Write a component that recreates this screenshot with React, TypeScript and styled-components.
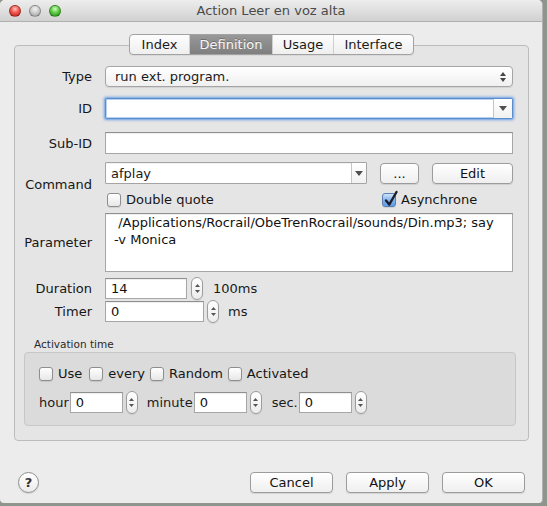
import React from "react";
import styled, { createGlobalStyle } from "styled-components";

const GlobalStyle = createGlobalStyle`
  html, body { margin: 0; padding: 0; }
  body {
    background: #8f948c;
    font-family: "DejaVu Sans", "Liberation Sans", sans-serif;
    font-size: 13px;
    color: #1a1a1a;
  }
  * { box-sizing: border-box; }
`;

const Window = styled.div`
  width: 543px;
  height: 503px;
  background: #ececec;
  border-radius: 5px 5px 4px 4px;
  overflow: hidden;
  display: flex;
  flex-direction: column;
  border-right: 1px solid #b2b2b2;
`;

const TitleBar = styled.div`
  height: 22px;
  flex: none;
  display: grid;
  grid-template-columns: 1fr auto 1fr;
  align-items: center;
  background: linear-gradient(#ededed, #d1d1d1);
  border-bottom: 1px solid #b0b0b0;
`;

const Lights = styled.div`
  display: flex;
  gap: 8px;
  padding-left: 9px;
`;

const Light = styled.span<{ $c: "red" | "grey" | "green" }>`
  width: 12px;
  height: 12px;
  border-radius: 50%;
  border: 1px solid rgba(0, 0, 0, 0.28);
  background: ${(p) =>
    p.$c === "red"
      ? "radial-gradient(circle at 50% 30%, #ffc4c0 0%, #f0584f 45%, #b81a14 100%)"
      : p.$c === "green"
      ? "radial-gradient(circle at 50% 30%, #d4fbc4 0%, #5fcd44 45%, #23891a 100%)"
      : "radial-gradient(circle at 50% 30%, #f4f4f4 0%, #c9c9c9 50%, #9a9a9a 100%)"};
`;

const Title = styled.div`
  font-size: 13px;
  color: #4a4a4a;
  white-space: nowrap;
`;

const Body = styled.div`
  flex: 1;
  display: flex;
  flex-direction: column;
  padding: 12px 13px 0 14px;
`;

const TabStrip = styled.div`
  align-self: center;
  display: flex;
  height: 21px;
  margin-bottom: -10px;
  position: relative;
  z-index: 1;
  border: 1px solid #a2a2a2;
  border-radius: 4px;
  background: linear-gradient(#fdfdfd, #efefef);
  overflow: hidden;
  box-shadow: 0 1px 1px rgba(0, 0, 0, 0.06);
`;

const Tab = styled.div<{ $active?: boolean; $w: number }>`
  width: ${(p) => p.$w}px;
  display: flex;
  align-items: center;
  justify-content: center;
  font-size: 13px;
  color: ${(p) => (p.$active ? "#f6f6f6" : "#1a1a1a")};
  background: ${(p) => (p.$active ? "linear-gradient(#989898, #7f7f7f)" : "transparent")};
  text-shadow: ${(p) => (p.$active ? "0 -1px 0 rgba(0,0,0,0.25)" : "none")};
  & + & {
    border-left: 1px solid #cfcfcf;
  }
`;

const Panel = styled.div`
  height: 396px;
  flex: none;
  border: 1px solid #bcbcbc;
  border-radius: 4px;
  background: #e5e5e5;
  padding-top: 20px;
  display: flex;
  flex-direction: column;
`;

const Form = styled.div`
  display: flex;
  flex-direction: column;
  padding-right: 15px;
`;

const Row = styled.div<{ $mt?: number }>`
  display: grid;
  grid-template-columns: 77px 1fr;
  column-gap: 13px;
  align-items: center;
  margin-top: ${(p) => p.$mt ?? 0}px;
`;

const Label = styled.div`
  text-align: right;
  white-space: nowrap;
  font-size: 13px;
  line-height: 15px;
  color: #161616;
`;

const Select = styled.div`
  height: 21px;
  border: 1px solid #a5a5a5;
  border-radius: 4px;
  background: linear-gradient(#ffffff, #f0f0f0);
  display: flex;
  align-items: center;
  justify-content: space-between;
  padding: 0 6px 0 9px;
  box-shadow: 0 1px 1px rgba(0, 0, 0, 0.08);
`;

const Combo = styled.div<{ $focus?: boolean; $w?: number }>`
  height: ${(p) => (p.$focus ? 21 : 22)}px;
  ${(p) => (p.$w ? `width: ${p.$w}px;` : "")}
  display: flex;
  background: #fff;
  border: 1px solid ${(p) => (p.$focus ? "#5b8ccc" : "#a4a4a4")};
  box-shadow: ${(p) =>
    p.$focus
      ? "0 0 0 1px #8fb6e6, 0 0 2px 2px rgba(130,172,228,0.55), inset 0 0 0 1px #b9d2f1"
      : "inset 0 1px 1px rgba(0,0,0,0.06)"};
  border-radius: ${(p) => (p.$focus ? 2 : 1)}px;
`;

const ComboText = styled.div`
  flex: 1;
  display: flex;
  align-items: center;
  padding-left: 5px;
  font-size: 13px;
`;

const ComboButton = styled.div<{ $w: number }>`
  width: ${(p) => p.$w}px;
  flex: none;
  border-left: 1px solid #c4c4c4;
  background: linear-gradient(#ffffff, #f1f1f1);
  display: flex;
  align-items: center;
  justify-content: center;
`;

const Input = styled.div<{ $w?: number; $h?: number }>`
  height: ${(p) => p.$h ?? 21}px;
  ${(p) => (p.$w ? `width: ${p.$w}px;` : "")}
  flex: none;
  background: #fff;
  border: 1px solid #a6a6a6;
  border-top-color: #8f8f8f;
  box-shadow: inset 0 1px 1px rgba(0, 0, 0, 0.07);
  display: flex;
  align-items: center;
  padding-left: 5px;
  font-size: 13px;
  color: #111;
`;

const TextArea = styled.div`
  height: 59px;
  background: #fff;
  border: 1px solid #a6a6a6;
  border-top-color: #8f8f8f;
  box-shadow: inset 0 1px 1px rgba(0, 0, 0, 0.07);
  padding: 0 0 0 8px;
  font-size: 13px;
  line-height: 17px;
  white-space: pre;
  color: #111;
`;

const CommandFields = styled.div`
  display: grid;
  grid-template-columns: 262px 39px 1fr;
  grid-template-rows: 22px 14px;
  column-gap: 13px;
  row-gap: 9px;
  align-items: center;
`;

const AsyncCell = styled.div`
  grid-column: 2 / 4;
  display: flex;
  height: 14px;
`;

const Button = styled.button<{ $w?: number }>`
  height: 21px;
  ${(p) => (p.$w ? `width: ${p.$w}px;` : "")}
  border: 1px solid #9c9c9c;
  border-radius: 4px;
  background: linear-gradient(#ffffff, #efefef);
  font-family: "DejaVu Sans", "Liberation Sans", sans-serif;
  font-size: 13px;
  color: #111;
  padding: 0;
  box-shadow: 0 1px 1px rgba(0, 0, 0, 0.1);
`;

const CheckLabel = styled.label<{ $ml?: number; $mr?: number }>`
  display: flex;
  flex: none;
  align-items: center;
  gap: 5px;
  height: 14px;
  line-height: 14px;
  font-size: 13px;
  color: #161616;
  white-space: nowrap;
  margin-left: ${(p) => p.$ml ?? 0}px;
  margin-right: ${(p) => p.$mr ?? 0}px;
`;

const Box = styled.span<{ $checked?: boolean }>`
  position: relative;
  width: 14px;
  height: 14px;
  flex: none;
  border-radius: 3px;
  border: 1px solid ${(p) => (p.$checked ? "#5a7fb3" : "#8e8e8e")};
  background: ${(p) =>
    p.$checked ? "linear-gradient(#cfe3f9, #7cb1ec 55%, #5d9ce6)" : "linear-gradient(#ffffff, #e7e7e7)"};
  box-shadow: 0 1px 1px rgba(0, 0, 0, 0.1);
`;

const CheckMark = styled.svg`
  position: absolute;
  left: 1px;
  top: -3px;
  overflow: visible;
`;

const Spin = styled.span<{ $ml: number }>`
  width: 12px;
  height: 23px;
  flex: none;
  margin-left: ${(p) => p.$ml}px;
  border: 1px solid #9d9d9d;
  border-radius: 6px;
  background: linear-gradient(#ffffff, #ececec);
  display: flex;
  flex-direction: column;
  align-items: center;
  justify-content: center;
  gap: 3px;
  box-shadow: 0 1px 1px rgba(0, 0, 0, 0.08);
`;

const InlineRow = styled.div`
  display: flex;
  align-items: center;
  height: 21px;
`;

const Unit = styled.span<{ $ml: number }>`
  margin-left: ${(p) => p.$ml}px;
  font-size: 13px;
  white-space: nowrap;
`;

const GroupTitle = styled.div`
  margin: 16px 0 0 19px;
  height: 12px;
  line-height: 12px;
  font-size: 10.5px;
  color: #2a2a2a;
`;

const Group = styled.div`
  margin: 2px 12px 0 9px;
  height: 74px;
  background: #dbdbdb;
  border: 1px solid #c7c7c7;
  border-radius: 4px;
  padding: 14px 0 0 14px;
  display: flex;
  flex-direction: column;
`;

const GroupRow = styled.div<{ $mt?: number; $h: number }>`
  display: flex;
  align-items: center;
  margin-top: ${(p) => p.$mt ?? 0}px;
  height: ${(p) => p.$h}px;
`;

const TimeLabel = styled.span<{ $ml?: number }>`
  margin-left: ${(p) => p.$ml ?? 0}px;
  margin-right: 1px;
  font-size: 13px;
  white-space: nowrap;
`;

const Footer = styled.div`
  display: flex;
  align-items: center;
  margin-top: 31px;
  padding: 0 4px;
  gap: 13px;
`;

const Help = styled.button`
  width: 21px;
  height: 21px;
  border-radius: 50%;
  border: 1px solid #8f8f8f;
  background: linear-gradient(#ffffff, #ececec);
  font-family: "DejaVu Sans", sans-serif;
  font-weight: bold;
  font-size: 13px;
  color: #333;
  padding: 0;
  display: flex;
  align-items: center;
  justify-content: center;
  box-shadow: 0 1px 1px rgba(0, 0, 0, 0.12);
`;

const Spacer = styled.div`
  flex: 1;
`;

const DownTri = ({ w = 8 }: { w?: number }) => (
  <svg width={w} height={5} viewBox="0 0 8 5">
    <path d="M0 0 H8 L4 5 Z" fill="#4f4f4f" />
  </svg>
);

const UpDown = () => (
  <svg width={6} height={10} viewBox="0 0 6 10">
    <path d="M0 4 L3 0 L6 4 Z" fill="#444" />
    <path d="M0 6 L3 10 L6 6 Z" fill="#444" />
  </svg>
);

const Spinner = ({ ml }: { ml: number }) => (
  <Spin $ml={ml}>
    <svg width={5} height={3} viewBox="0 0 5 3">
      <path d="M0 3 L2.5 0 L5 3 Z" fill="#555" />
    </svg>
    <svg width={5} height={3} viewBox="0 0 5 3">
      <path d="M0 0 L2.5 3 L5 0 Z" fill="#555" />
    </svg>
  </Spin>
);

const Check = ({ label, checked, ml, mr }: { label: string; checked?: boolean; ml?: number; mr?: number }) => (
  <CheckLabel $ml={ml} $mr={mr}>
    <Box $checked={checked}>
      {checked && (
        <CheckMark width={14} height={16} viewBox="0 0 14 16">
          <path
            d="M2 9.5 L5.3 13.5 L12.5 1"
            fill="none"
            stroke="#1d1d2a"
            strokeWidth={2.4}
            strokeLinecap="round"
            strokeLinejoin="round"
          />
        </CheckMark>
      )}
    </Box>
    {label}
  </CheckLabel>
);

export default function App() {
  return (
    <>
      <GlobalStyle />
      <Window>
        <TitleBar>
          <Lights>
            <Light $c="red" />
            <Light $c="grey" />
            <Light $c="green" />
          </Lights>
          <Title>Action Leer en voz alta</Title>
          <div />
        </TitleBar>
        <Body>
          <TabStrip>
            <Tab $w={59}>Index</Tab>
            <Tab $w={83} $active>
              Definition
            </Tab>
            <Tab $w={61}>Usage</Tab>
            <Tab $w={80}>Interface</Tab>
          </TabStrip>
          <Panel>
            <Form>
              <Row>
                <Label>Type</Label>
                <Select>
                  <span>run ext. program.</span>
                  <UpDown />
                </Select>
              </Row>
              <Row $mt={11}>
                <Label>ID</Label>
                <Combo $focus>
                  <ComboText />
                  <ComboButton $w={19}>
                    <DownTri />
                  </ComboButton>
                </Combo>
              </Row>
              <Row $mt={13}>
                <Label>Sub-ID</Label>
                <Input $h={22} />
              </Row>
              <Row $mt={8}>
                <Label>Command</Label>
                <CommandFields>
                  <Combo $w={262}>
                    <ComboText>afplay</ComboText>
                    <ComboButton $w={15}>
                      <DownTri />
                    </ComboButton>
                  </Combo>
                  <Button>...</Button>
                  <Button>Edit</Button>
                  <Check label="Double quote" ml={2} />
                  <AsyncCell>
                    <Check label="Asynchrone" checked ml={2} />
                  </AsyncCell>
                </CommandFields>
              </Row>
              <Row $mt={6}>
                <Label>Parameter</Label>
                <TextArea>{" /Applications/Rocrail/ObeTrenRocrail/sounds/Din.mp3; say\n-v Monica"}</TextArea>
              </Row>
              <Row $mt={6}>
                <Label>Duration</Label>
                <InlineRow>
                  <Input $w={82}>14</Input>
                  <Spinner ml={4} />
                  <Unit $ml={10}>100ms</Unit>
                </InlineRow>
              </Row>
              <Row $mt={2}>
                <Label>Timer</Label>
                <InlineRow>
                  <Input $w={99}>0</Input>
                  <Spinner ml={3} />
                  <Unit $ml={9}>ms</Unit>
                </InlineRow>
              </Row>
            </Form>
            <GroupTitle>Activation time</GroupTitle>
            <Group>
              <GroupRow $h={14}>
                <Check label="Use" mr={7} />
                <Check label="every" mr={5} />
                <Check label="Random" mr={5} />
                <Check label="Activated" />
              </GroupRow>
              <GroupRow $h={21} $mt={11}>
                <TimeLabel>hour</TimeLabel>
                <Input $w={53}>0</Input>
                <Spinner ml={3} />
                <TimeLabel $ml={9}>minute</TimeLabel>
                <Input $w={53}>0</Input>
                <Spinner ml={3} />
                <TimeLabel $ml={10}>sec.</TimeLabel>
                <Input $w={53}>0</Input>
                <Spinner ml={3} />
              </GroupRow>
            </Group>
          </Panel>
          <Footer>
            <Help>?</Help>
            <Spacer />
            <Button $w={83}>Cancel</Button>
            <Button $w={83}>Apply</Button>
            <Button $w={83}>OK</Button>
          </Footer>
        </Body>
      </Window>
    </>
  );
}
